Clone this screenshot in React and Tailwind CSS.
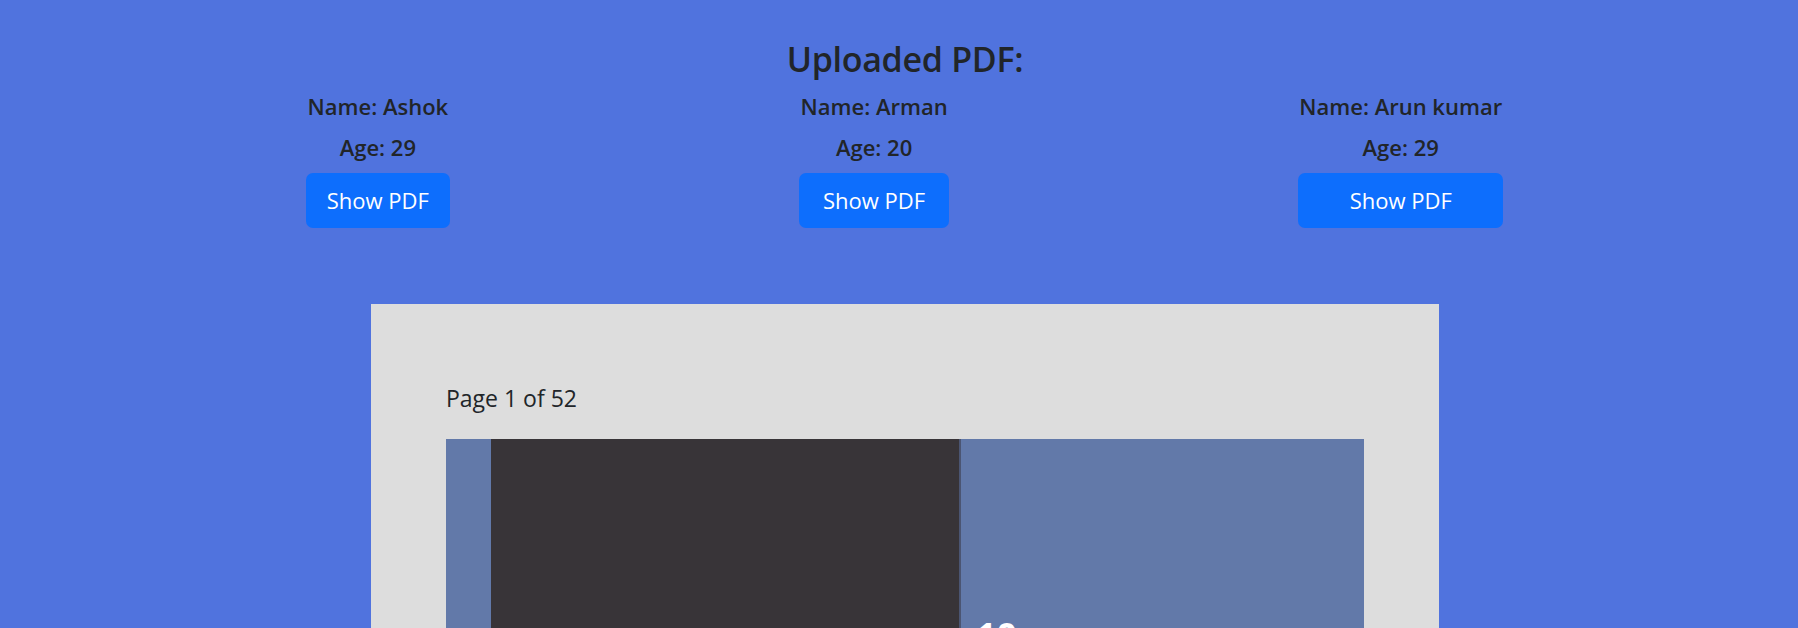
import React from "react";

const people = [
  { name: "Ashok", age: 29 },
  { name: "Arman", age: 20 },
  { name: "Arun kumar", age: 29 },
];

export default function App() {
  return (
    <div
      className="min-h-screen w-full bg-[#5073de] text-[#212529]"
      style={{ fontFamily: '"Open Sans", "Noto Sans", sans-serif' }}
    >
      <div className="flex flex-col items-center pl-[12px] pt-[39px]">
        <h2 className="text-[34px] leading-[40px] font-semibold tracking-[-0.3px]">Uploaded PDF:</h2>
      </div>

      <div className="mt-[7px] flex justify-around pl-[131px] pr-[120px]">
        {people.map((p) => (
          <div key={p.name} className="flex flex-col items-stretch text-center">
            <div className="text-[22px] leading-[41px] font-semibold whitespace-nowrap">
              Name: {p.name}
            </div>
            <div className="text-[22px] leading-[41px] font-semibold">Age: {p.age}</div>
            <button className="mx-[-1px] mt-[5px] flex h-[55px] items-center justify-center whitespace-nowrap rounded-[7px] bg-[#0d6efd] px-[21px] text-[22px] font-normal text-white">
              Show PDF
            </button>
          </div>
        ))}
      </div>

      <div className="flex flex-col items-center pl-[12px] pt-[76px]">
        <div className="w-[1068px] bg-[#dddddd] px-[75px] pt-[79px]">
          <p className="text-[23px] leading-[30px]">Page 1 of 52</p>
          <div className="mt-[26px]">
            <svg width="918" height="700" viewBox="0 0 918 700" className="block">
              <rect x="0" y="0" width="918" height="700" fill="#6279a9" />
              <rect x="45" y="0" width="469" height="700" fill="#383438" />
              <rect x="513" y="0" width="2" height="700" fill="#4b5572" />
              <text
                x="530"
                y="210"
                fill="#ffffff"
                fontSize="36"
                fontWeight="700"
                fontFamily="Open Sans, sans-serif"
              >
                10
              </text>
            </svg>
          </div>
        </div>
      </div>
    </div>
  );
}
